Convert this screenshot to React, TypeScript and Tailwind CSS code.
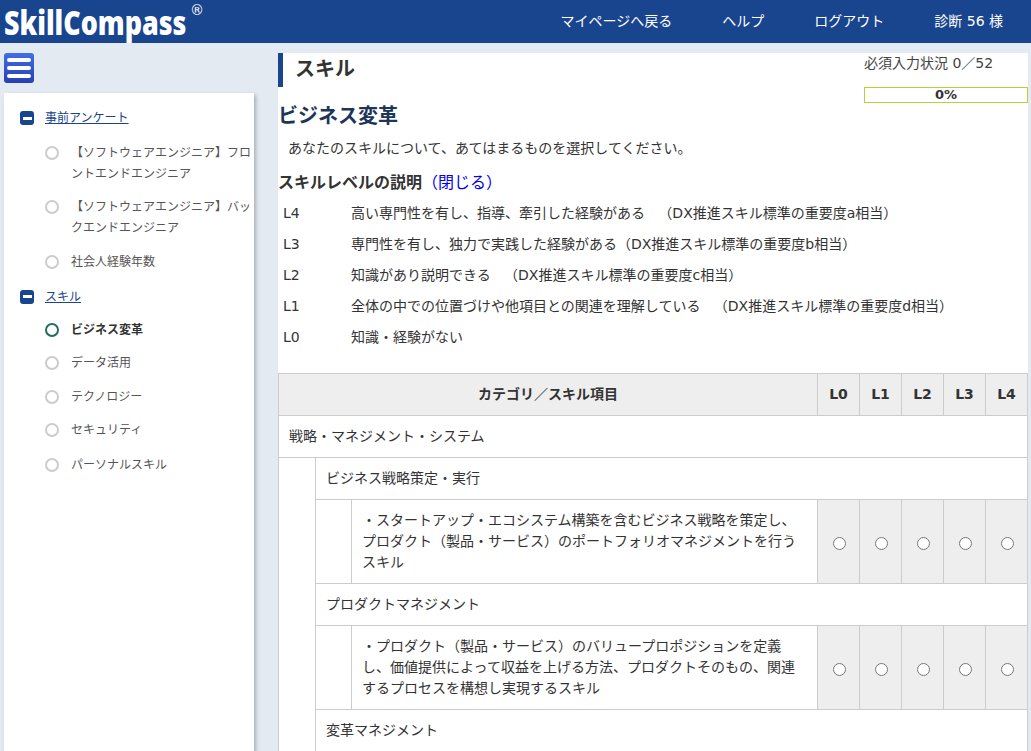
const jp = "font-['DejaVu_Sans','Noto_Sans_CJK_JP',sans-serif]";

const levels = [
  ["L4", "高い専門性を有し、指導、牽引した経験がある\u00a0\u00a0\u00a0（DX推進スキル標準の重要度a相当）"],
  ["L3", "専門性を有し、独力で実践した経験がある（DX推進スキル標準の重要度b相当）"],
  ["L2", "知識があり説明できる\u00a0\u00a0\u00a0（DX推進スキル標準の重要度c相当）"],
  ["L1", "全体の中での位置づけや他項目との関連を理解している\u00a0\u00a0\u00a0（DX推進スキル標準の重要度d相当）"],
  ["L0", "知識・経験がない"],
];

function Minus() {
  return (
    <span className="flex h-[14px] w-[14px] shrink-0 items-center justify-center rounded-[3px] bg-[#19448e]">
      <span className="h-[3px] w-[9px] bg-white" />
    </span>
  );
}

function NavItem({ label, active, pb = "pb-[12.5px]" }: { label: string; active?: boolean; pb?: string }) {
  return (
    <li className={`flex items-start pl-[41px] ${pb}`}>
      <span className={`mt-[3px] h-[14px] w-[14px] shrink-0 rounded-full border-[2px] ${active ? "border-[#1f6f5c]" : "border-[#cccccc]"}`} />
      <span className={`ml-[12px] text-[12px] leading-[21px] ${active ? "font-bold text-[#333]" : "text-[#555]"}`}>{label}</span>
    </li>
  );
}

function Radios({ name }: { name: string }) {
  return (
    <>
      {[0, 1, 2, 3, 4].map((i) => (
        <td key={i} className="border border-[#cccccc] bg-[#eeeeee] text-center align-middle">
          <input type="radio" name={name} className="m-0 mt-[2px] ml-[2px] h-[13px] w-[13px] align-middle" />
        </td>
      ))}
    </>
  );
}

export default function App() {
  return (
    <div className={`${jp} h-[751px] overflow-hidden bg-[#e3eaf2] text-[14px] text-[#333]`}>
      <header className="flex h-[43px] items-center bg-[#19448e] text-white">
        <div className="flex flex-1 items-start pl-[4px]">
          <span className="w-[186px] origin-left scale-x-[0.79] font-['Open_Sans',sans-serif] text-[34px] leading-[38px] font-extrabold whitespace-nowrap">SkillCompass</span>
          <span className="mt-[-3px] text-[14px] leading-[20px]">®</span>
        </div>
        <nav className="flex items-center text-[14px]">
          <span className="mr-[50px]">マイページへ戻る</span>
          <span className="mr-[50px]">ヘルプ</span>
          <span className="mr-[50px]">ログアウト</span>
          <span className="mr-[28px]">診断 56 様</span>
        </nav>
      </header>

      <div className="flex pt-[10px]">
        <aside className="ml-[4px] w-[250px] shrink-0">
          <div className="flex h-[30px] w-[30px] flex-col justify-center gap-[4px] rounded-[3px] bg-gradient-to-b from-[#3f6fe8] to-[#2a3fb0] px-[3px]">
            <span className="h-[4px] rounded-[2px] bg-white" />
            <span className="h-[4px] rounded-[2px] bg-white" />
            <span className="h-[4px] rounded-[2px] bg-white" />
          </div>
          <div className="mt-[10px] h-[700px] bg-white pt-[15px] shadow-[2px_2px_4px_rgba(0,0,0,0.25)]">
            <div className="flex items-center pb-[14.5px] pl-[16px]">
              <Minus />
              <a className="ml-[11px] text-[12px] leading-[20px] text-[#19448e] underline">事前アンケート</a>
            </div>
            <ul>
              <NavItem label="【ソフトウェアエンジニア】フロントエンドエンジニア" />
              <NavItem label="【ソフトウェアエンジニア】バックエンドエンジニア" pb="pb-[13px]" />
              <NavItem label="社会人経験年数" pb="pb-[13.5px]" />
            </ul>
            <div className="flex items-center pb-[13px] pl-[16px]">
              <Minus />
              <a className="ml-[11px] text-[12px] leading-[20px] text-[#19448e] underline">スキル</a>
            </div>
            <ul>
              <NavItem label="ビジネス変革" active />
              <NavItem label="データ活用" />
              <NavItem label="テクノロジー" />
              <NavItem label="セキュリティ" pb="pb-[13.5px]" />
              <NavItem label="パーソナルスキル" />
            </ul>
          </div>
        </aside>

        <main className="ml-[24px] mr-[3px] min-w-0 flex-1 bg-white">
          <div className="flex h-[50px] items-start justify-between">
            <h1 className="h-[34px] border-l-[5px] border-[#19448e] pl-[12px] text-[20px] leading-[32px] font-bold">スキル</h1>
            <div className="w-[164px]">
              <div className="text-[14px] leading-[21px] text-[#444]">必須入力状況 0／52</div>
              <div className="mt-[13px] h-[16px] border border-[#b5d334] text-center text-[13px] leading-[14px] font-bold">0%</div>
            </div>
          </div>
          <h2 className="text-[20px] leading-[26px] font-bold text-[#1d3557]">ビジネス変革</h2>
          <p className="mt-[9px] pl-[10px] text-[14px] leading-[20px]">あなたのスキルについて、あてはまるものを選択してください。</p>
          <div className="mt-[15px] text-[16px] leading-[20px] font-bold">
            スキルレベルの説明<span className="font-normal text-[#0000ee]">（閉じる）</span>
          </div>
          <dl className="mt-[5px] mb-[20px]">
            {levels.map(([l, text]) => (
              <div key={l} className="flex h-[31px] items-center pl-[5px] text-[14px]">
                <dt className="w-[68px]">{l}</dt>
                <dd>{text}</dd>
              </div>
            ))}
          </dl>
          <table className="w-[750px] table-fixed border-collapse text-[14px]">
            <colgroup>
              <col className="w-[37px]" />
              <col className="w-[36px]" />
              <col />
              <col className="w-[42px]" />
              <col className="w-[42px]" />
              <col className="w-[42px]" />
              <col className="w-[42px]" />
              <col className="w-[42px]" />
            </colgroup>
            <tbody>
              <tr className="h-[42px] bg-[#eeeeee] font-bold">
                <th colSpan={3} className="border border-[#cccccc]">カテゴリ／スキル項目</th>
                {["L0", "L1", "L2", "L3", "L4"].map((l) => (
                  <th key={l} className="border border-[#cccccc]">{l}</th>
                ))}
              </tr>
              <tr className="h-[42px]">
                <td colSpan={8} className="border border-[#cccccc] pl-[10px]">戦略・マネジメント・システム</td>
              </tr>
              <tr className="h-[42px]">
                <td rowSpan={6} className="border border-[#cccccc]" />
                <td colSpan={7} className="border border-[#cccccc] pl-[10px]">ビジネス戦略策定・実行</td>
              </tr>
              <tr className="h-[84px]">
                <td className="border border-[#cccccc]" />
                <td className="border border-[#cccccc] px-[10px] leading-[21px]">
                  ・スタートアップ・エコシステム構築を含むビジネス戦略を策定し、プロダクト（製品・サービス）のポートフォリオマネジメントを行うスキル
                </td>
                <Radios name="q1" />
              </tr>
              <tr className="h-[42px]">
                <td colSpan={7} className="border border-[#cccccc] pl-[10px]">プロダクトマネジメント</td>
              </tr>
              <tr className="h-[84px]">
                <td className="border border-[#cccccc]" />
                <td className="border border-[#cccccc] px-[10px] leading-[21px]">
                  ・プロダクト（製品・サービス）のバリュープロポジションを定義し、価値提供によって収益を上げる方法、プロダクトそのもの、関連するプロセスを構想し実現するスキル
                </td>
                <Radios name="q2" />
              </tr>
              <tr className="h-[42px]">
                <td colSpan={7} className="border border-[#cccccc] pl-[10px]">変革マネジメント</td>
              </tr>
            </tbody>
          </table>
        </main>
      </div>
    </div>
  );
}
